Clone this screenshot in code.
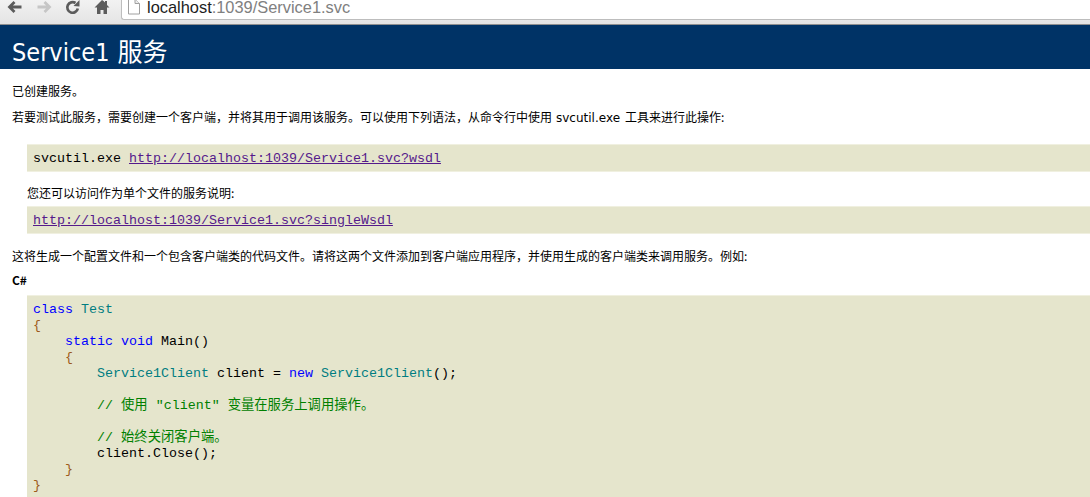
<div class="page">
  <div class="toolbar">
    <div class="nav">
      <svg class="icon" viewBox="0 0 16 16"><path d="M14.500 7H3M7.500 2 2.500 7l5 5" fill="none" stroke="#5c5c5c" stroke-width="2.800"/></svg>
      <svg class="icon" viewBox="0 0 16 16"><path d="M1.500 7H13M8.500 2l5 5-5 5" fill="none" stroke="#c6c6c6" stroke-width="2.800"/></svg>
      <svg class="icon" viewBox="0 0 16 16"><path d="M12.800 8.500A5.300 5.300 0 1 1 10.500 3" fill="none" stroke="#5c5c5c" stroke-width="2.700"/><path d="M8.500 6 14.500 6.500V0z" fill="#5c5c5c"/></svg>
      <svg class="icon" viewBox="0 0 16 16"><path d="M8 0 .5 7.500H3V14h3.500v-4h3v4H13V7.500h2.500L13 5V1h-2v1.500L9.500 1z" fill="#5c5c5c"/></svg>
    </div>
    <div class="omnibox">
      <svg class="file" viewBox="0 0 12 15"><path d="M.5-1h6.500L11.500 3.500v10.500H.5z" fill="#fff" stroke="#a0a0a0"/><path d="M7 -1V3.500h4.500" fill="#ececec" stroke="#a0a0a0"/></svg>
      <span class="url"><span class="host">localhost</span>:1039/Service1.svc</span>
    </div>
  </div>

  <h1 class="heading">Service1 服务</h1>

  <div class="content">
    <p class="created">已创建服务。</p>
    <p class="second">若要测试此服务，需要创建一个客户端，并将其用于调用该服务。可以使用下列语法，从命令行中使用<span class="tool">svcutil.exe</span>工具来进行此操作:</p>

    <pre class="box first">svcutil.exe <a href="#wsdl">http://localhost:1039/Service1.svc?wsdl</a></pre>
    <p class="inset">您还可以访问作为单个文件的服务说明:</p>
    <pre class="box"><a href="#single">http://localhost:1039/Service1.svc?singleWsdl</a></pre>

    <p class="after">这将生成一个配置文件和一个包含客户端类的代码文件。请将这两个文件添加到客户端应用程序，并使用生成的客户端类来调用服务。例如:</p>
    <p class="lang"><b>C#</b></p>

    <div class="box code">
      <div class="line"><span class="kw">class</span> <span class="ty">Test</span></div>
      <div class="line br">{'{'}</div>
      <div class="line in1"><span class="kw">static</span> <span class="kw">void</span> Main()</div>
      <div class="line in1 br">{'{'}</div>
      <div class="line in2"><span class="ty">Service1Client</span> client = <span class="kw">new</span> <span class="ty">Service1Client</span>();</div>
      <div class="line in2 cm gap">// 使用 "client" 变量在服务上调用操作。</div>
      <div class="line in2 cm gap">// 始终关闭客户端。</div>
      <div class="line in2">client.Close();</div>
      <div class="line in1 br">{'}'}</div>
      <div class="line br">{'}'}</div>
    </div>
  </div>
</div>

<style>
  :global(html), :global(body) {
    margin: 0;
    height: 100%;
    overflow: hidden;
    background: #fff;
  }

  .page {
    height: 497px;
    overflow: hidden;
    font-family: "Noto Sans CJK SC", "Liberation Sans", sans-serif;
    font-size: 12px;
    color: #000;
  }

  .toolbar {
    display: flex;
    align-items: flex-start;
    height: 24px;
    background: linear-gradient(#f2f2f2, #e4e4e4);
    border-bottom: 1px solid #8f8f8f;
  }

  .nav {
    display: flex;
    gap: 13px;
    width: 121px;
    padding-left: 7px;
    box-sizing: border-box;
    flex: none;
  }

  .icon {
    display: block;
    width: 16px;
    height: 16px;
  }

  .omnibox {
    flex: 1;
    display: flex;
    align-items: flex-start;
    gap: 7px;
    height: 19px;
    padding-left: 6px;
    overflow: hidden;
    background: #fff;
    border-left: 1px solid #bdbdbd;
    border-bottom: 1px solid #bdbdbd;
    border-bottom-left-radius: 3px;
  }

  .file {
    display: block;
    width: 12px;
    height: 15px;
    flex: none;
  }

  .url {
    font-family: "Liberation Sans", sans-serif;
    font-size: 16.400px;
    line-height: 14px;
    color: #808080;
  }

  .host {
    color: #1d1d1d;
  }

  .heading {
    margin: 0;
    height: 44px;
    line-height: 55px;
    padding-left: 12px;
    overflow: hidden;
    background: #003366;
    color: #fff;
    font-family: "DejaVu Sans Condensed", "DejaVu Sans", "Noto Sans CJK SC", sans-serif;
    font-size: 25px;
    font-weight: 400;
    word-spacing: 1px;
  }

  .content {
    padding-left: 12px;
  }

  p {
    margin: 0;
    line-height: 16px;
  }

  .created {
    padding-top: 14px;
  }

  .second {
    margin-top: 10px;
  }

  .tool {
    margin: 0 5px 0 4px;
    font-family: "DejaVu Sans", sans-serif;
    font-size: 12px;
  }

  .box {
    margin: 0 0 0 15px;
    padding: 6px 6px 4px;
    height: 16px;
    line-height: 16px;
    background: #e5e5cc;
    border-top: 1px solid #f0f0e0;
    border-bottom: 1px solid #f0f0e0;
    font-family: "Liberation Mono", "Noto Sans CJK SC", monospace;
    font-size: 13.333px;
    white-space: pre;
  }

  .first {
    margin-top: 18px;
  }

  .box a {
    color: #551a8b;
  }

  .inset {
    margin: 13px 0 5px 15px;
  }

  .after {
    margin-top: 14px;
  }

  .lang {
    margin-top: 8px;
  }

  .code {
    margin-top: 7px;
    height: auto;
    white-space: normal;
  }

  .line {
    height: 16px;
    white-space: pre;
  }

  .in1 {
    padding-left: 32px;
  }

  .in2 {
    padding-left: 64px;
  }

  .gap {
    margin-top: 16px;
  }

  .kw {
    color: #0000ff;
  }

  .ty {
    color: #007d81;
  }

  .br {
    color: #9c5a1a;
  }

  .cm {
    color: #008000;
  }
</style>
